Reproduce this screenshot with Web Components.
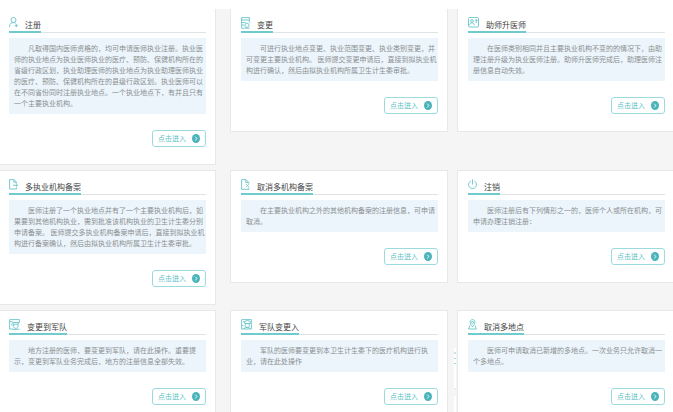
<!DOCTYPE html>
<html lang="zh-CN">
<head>
<meta charset="utf-8">
<title>业务办理</title>
<style>
body{margin:0;background:#fff;overflow-x:clip;font-family:"Noto Sans CJK SC","Liberation Sans",sans-serif;}
</style>
</head>
<body>
<service-board>
  <service-column index="1">
    <service-card first icon="user" heading="注册">凡取得国内医师资格的，均可申请医师执业注册。执业医师的执业地点为执业医师执业的医疗、预防、保健机构所在的省级行政区划，执业助理医师的执业地点为执业助理医师执业的医疗、预防、保健机构所在的县级行政区划。执业医师可以在不同省份同时注册执业地点。一个执业地点下，有并且只有一个主要执业机构。</service-card>
    <service-card icon="doc-go" heading="多执业机构备案">医师注册了一个执业地点并有了一个主要执业机构后，如果要到其他机构执业，需到批准该机构执业的卫生计生委分别申请备案。 医师提交多执业机构备案申请后，直接到拟执业机构进行备案确认，然后由拟执业机构所属卫生计生委审批。</service-card>
    <service-card icon="to-army" heading="变更到军队">地方注册的医师，要变更到军队，请在此操作。重要提示，变更到军队业务完成后，地方的注册信息全部失效。</service-card>
  </service-column>
  <service-column index="3">
    <service-card first icon="edit" heading="变更">可进行执业地点变更、执业范围变更、执业类别变更，并可变更主要执业机构。 医师提交变更申请后，直接到拟执业机构进行确认，然后由拟执业机构所属卫生计生委审批。</service-card>
    <service-card icon="doc-x" heading="取消多机构备案">在主要执业机构之外的其他机构备案的注册信息，可申请取消。</service-card>
    <service-card icon="from-army" heading="军队变更入">军队的医师要变更到本卫生计生委下的医疗机构进行执业，请在此处操作</service-card>
  </service-column>
  <service-column index="5">
    <service-card first icon="upgrade" heading="助师升医师">在医师类别相同并且主要执业机构不变的的情况下，由助理注册升级为执业医师注册。助师升医师完成后，助理医师注册信息自动失效。</service-card>
    <service-card icon="power" heading="注销">医师注册后有下列情形之一的，医师个人或所在机构，可申请办理注销注册：</service-card>
    <service-card icon="pin" heading="取消多地点">医师可申请取消已新增的多地点。一次业务只允许取消一个多地点。</service-card>
  </service-column>
</service-board>
<script>
const ICONS = {
  user: [9, 11, '<circle cx="4.500" cy="3" r="2.500"/><path d="M.6 10V8.800C.6 6.800 2 5.600 4.500 5.600q1.300 0 2.200.7M7.300 7v3.200M5.700 8.600h3.200"/>'],
  edit: [9, 12, '<path d="M8.400 5.500V.6H.6v10.600h3M.6 3h7.800M.6 5.500h4M.6 8h2.500"/><circle cx="6" cy="8.300" r="2.100"/><path d="M3.500 11.200H8.500"/>'],
  upgrade: [11, 11, '<rect x=".5" y=".5" width="10" height="9.500" rx="1"/><circle cx="4" cy="4" r="1.400"/><path d="M1.700 8.200C1.700 5 6.300 5 6.300 8.200M8.300 6V2.500M7 3.800l1.300-1.300 1.200 1.300"/>'],
  'doc-go': [9, 11, '<path d="M7.500 8.500V10H.6V.6h4.200l2.700 2.600v1.300M4.800.6v2.600h2.700M4 6.300h4.500M7 4.700l1.500 1.600L7 7.800"/>'],
  'doc-x': [9, 11, '<path d="M7.800 8.500V10.300H.6V.6h4.200l3 3v1M4.800.6v3h3M5.200 5.200l2.600 2.600M7.800 5.200L5.200 7.800"/>'],
  power: [9, 11, '<path d="M2.700 2.100a3.950 3.950 0 1 0 3.600 0M4.500.3v5.200"/>'],
  'to-army': [11, 11, '<path d="M3 10H.6V.6h9.800v3M.6 2.700h3M2 5l2 1.500M3.500 3.500h6.500L9 5.200H4.500zM4.700 5.200v2.300c0 2.500 4.300 2.500 4.300 0V5.200M3 10.300h7.500"/>'],
  'from-army': [11, 11, '<path d="M.6 10V.6h9.800V10zM2 2.500L4 4M.6 6l2 1M3.500 2.500l3-1 2.800 1v2H4zM4.300 4.500v2c0 2.400 4 2.400 4 0v-2M2.500 10c1-2 6-2 7 0"/>'],
  pin: [9, 11, '<path d="M4.500 7.800C1 4 1.800.6 4.500.6S8 4 4.500 7.800z"/><circle cx="4.500" cy="3.400" r="1"/><path d="M1.900 6.500L.6 10h7.800L7.100 6.500"/>']
};

customElements.define('service-icon', class extends HTMLElement {
  connectedCallback() {
    const [w, h, body] = ICONS[this.getAttribute('name')];
    this.attachShadow({mode: 'open'}).innerHTML = `
      <style>
        :host{display:block;flex:none}
        svg{display:block;fill:none;stroke:#68c5ca;stroke-width:.9}
      </style>
      <svg width="${w}" height="${h}" viewBox="0 0 ${w} ${h}" aria-hidden="true">${body}</svg>`;
  }
});

customElements.define('enter-button', class extends HTMLElement {
  connectedCallback() {
    this.attachShadow({mode: 'open'}).innerHTML = `
      <style>
        :host{display:block}
        button{display:flex;align-items:center;gap:6px;height:17px;box-sizing:border-box;margin:0;
          padding:0 5px;border:1px solid #9bdbe0;border-radius:3px;background:#fff;
          color:#5cbfc5;font:7px/15px "Noto Sans CJK SC",sans-serif;white-space:nowrap;cursor:pointer}
        svg{display:block}
      </style>
      <button type="button"><slot></slot>
        <svg width="8" height="9" viewBox="0 0 8 9" aria-hidden="true"><ellipse cx="4" cy="4.500" rx="4" ry="4.500" fill="#4bb4bb"/><path d="M3.200 2.700L5 4.500 3.200 6.300" fill="none" stroke="#fff" stroke-width=".9"/></svg>
      </button>`;
  }
});

customElements.define('service-card', class extends HTMLElement {
  connectedCallback() {
    this.attachShadow({mode: 'open'}).innerHTML = `
      <style>
        :host{display:block;position:relative;grid-column:var(--track);background:#fff;
          border:1px solid #e8e8e8;padding:8px 9px 17px 10px}
        :host([first]){border-top:0}
        header{display:flex;border-bottom:1px solid #dfe3e3}
        .tab{display:flex;gap:7px;height:14px;border-bottom:2px solid #70cbcf;margin-bottom:-1px}
        h2{margin:0;padding-top:2px;font-size:8px;line-height:12px;font-weight:400;color:#444;white-space:nowrap}
        p{margin:5px 0 16px;padding:5px 0 5px 5px;background:#ecf5fb;color:#8b8f92;
          font-size:7px;line-height:11px;text-indent:2em;text-spacing-trim:space-all}
        footer{display:flex;justify-content:flex-end}
      </style>
      <header><div class="tab"><service-icon name="${this.getAttribute('icon')}"></service-icon><h2>${this.getAttribute('heading')}</h2></div></header>
      <p><slot></slot></p>
      <footer><enter-button>点击进入</enter-button></footer>`;
  }
});

customElements.define('service-column', class extends HTMLElement {
  connectedCallback() {
    this.style.setProperty('--track', this.getAttribute('index'));
    this.attachShadow({mode: 'open'}).innerHTML = `
      <style>:host{display:contents}</style><slot></slot>`;
  }
});

customElements.define('service-board', class extends HTMLElement {
  connectedCallback() {
    this.attachShadow({mode: 'open'}).innerHTML = `
      <style>
        :host{display:grid;position:relative;grid-template-columns:minmax(0,1fr) 14px minmax(0,1fr) 9px minmax(0,1fr);
          grid-template-rows:repeat(3,auto);grid-auto-flow:column;align-items:start;row-gap:5px;
          margin:9px -2px 0;background:#f5f5f5}
        .dock{position:absolute;right:219px;bottom:0;width:2px;height:75px;
          background:linear-gradient(#fff 4px,#bfe6e8 4px 6px,#fff 6px 10px,#9bdbe0 10px 11px,#fff 11px 15px,#9bdbe0 15px 16px,#fff 16px 40px,#e8e8e8 40px 41px,#f5f5f5 41px 48px,#fff 48px)}
      </style><slot></slot><div class="dock"></div>`;
  }
});
</script>
</body>
</html>
